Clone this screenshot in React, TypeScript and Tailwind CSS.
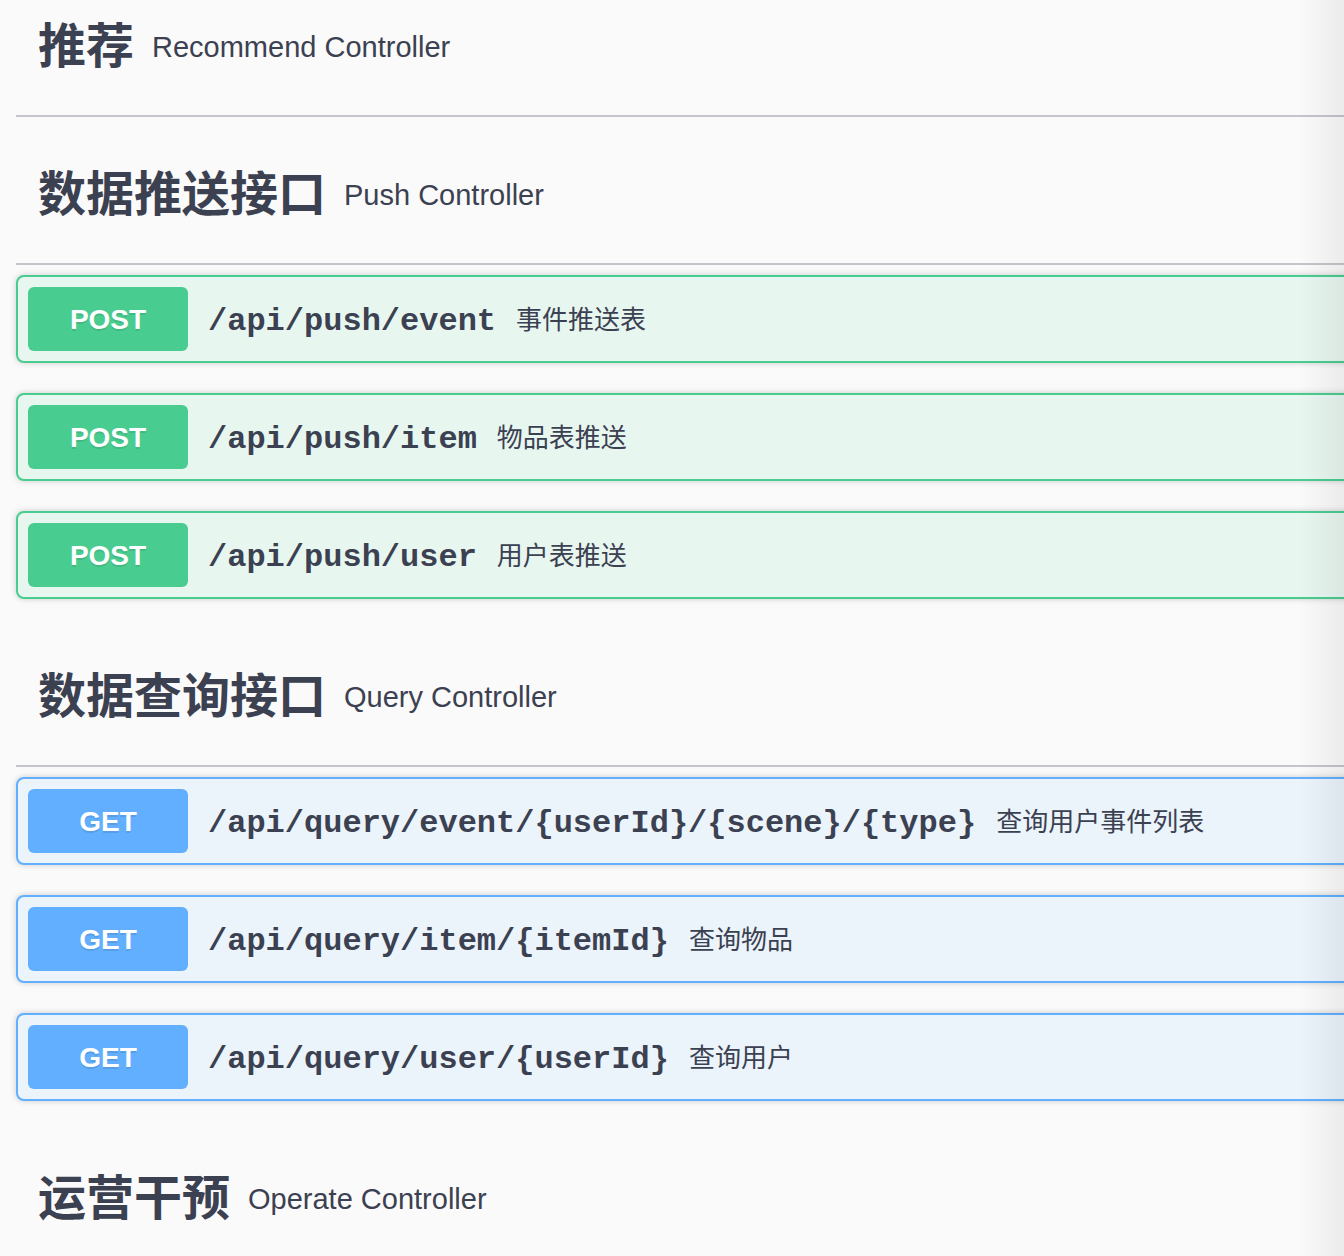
import React from "react";

type Op = { method: "POST" | "GET"; path: string; desc: string };

const sections: { title: string; sub: string; ops: Op[] }[] = [
  { title: "推荐", sub: "Recommend Controller", ops: [] },
  {
    title: "数据推送接口",
    sub: "Push Controller",
    ops: [
      { method: "POST", path: "/api/push/event", desc: "事件推送表" },
      { method: "POST", path: "/api/push/item", desc: "物品表推送" },
      { method: "POST", path: "/api/push/user", desc: "用户表推送" },
    ],
  },
  {
    title: "数据查询接口",
    sub: "Query Controller",
    ops: [
      { method: "GET", path: "/api/query/event/{userId}/{scene}/{type}", desc: "查询用户事件列表" },
      { method: "GET", path: "/api/query/item/{itemId}", desc: "查询物品" },
      { method: "GET", path: "/api/query/user/{userId}", desc: "查询用户" },
    ],
  },
  { title: "运营干预", sub: "Operate Controller", ops: [] },
];

const sans = { fontFamily: '"Liberation Sans", Arial, "Noto Sans CJK SC", sans-serif' };
const cjk = { fontFamily: '"Liberation Sans", "Noto Sans CJK SC", sans-serif' };
const mono = { fontFamily: '"Liberation Mono", "Courier New", monospace' };

function OpRow({ op }: { op: Op }) {
  const isPost = op.method === "POST";
  return (
    <div
      className={
        "mb-[30px] -mr-[12px] flex h-[88px] items-center rounded-[8px] border-2 px-[10px] shadow-[0_0_6px_rgba(0,0,0,0.19)] " +
        (isPost ? "border-[#49cc90] bg-[#e8f6f0]" : "border-[#61affe] bg-[#ebf3fb]")
      }
    >
      <div
        className={
          "flex h-[64px] w-[160px] shrink-0 items-center justify-center rounded-[6px] pt-[2px] text-[28px] font-bold text-white [text-shadow:0_2px_0_rgba(0,0,0,0.1)] " +
          (isPost ? "bg-[#49cc90]" : "bg-[#61affe]")
        }
        style={sans}
      >
        {op.method}
      </div>
      <span className="mt-[5px] pl-[20px] pr-[20px] text-[32px] font-bold text-[#3b4151]" style={mono}>
        {op.path}
      </span>
      <span className="mt-[3px] text-[26px] text-[#3b4151]" style={cjk}>
        {op.desc}
      </span>
    </div>
  );
}

export default function App() {
  return (
    <div className="relative min-h-[1256px] w-full overflow-hidden bg-[#fafafa]">
      <div className="-mt-[21px] pl-[16px]">
        {sections.map((s, i) => (
          <div key={i}>
            <div className="mb-[10px] flex h-[138px] items-center border-b-2 border-[#c4c5ca] pl-[22px] text-[#3b4151]">
              <span className="text-[48px] font-bold leading-none" style={cjk}>
                {s.title}
              </span>
              <span className="pl-[18px] text-[29px] leading-none" style={sans}>
                {s.sub}
              </span>
            </div>
            {s.ops.map((op, j) => (
              <OpRow key={j} op={op} />
            ))}
          </div>
        ))}
      </div>
      <div className="pointer-events-none absolute right-0 top-0 h-full w-[44px] bg-gradient-to-r from-transparent to-black/[0.06]" />
    </div>
  );
}
